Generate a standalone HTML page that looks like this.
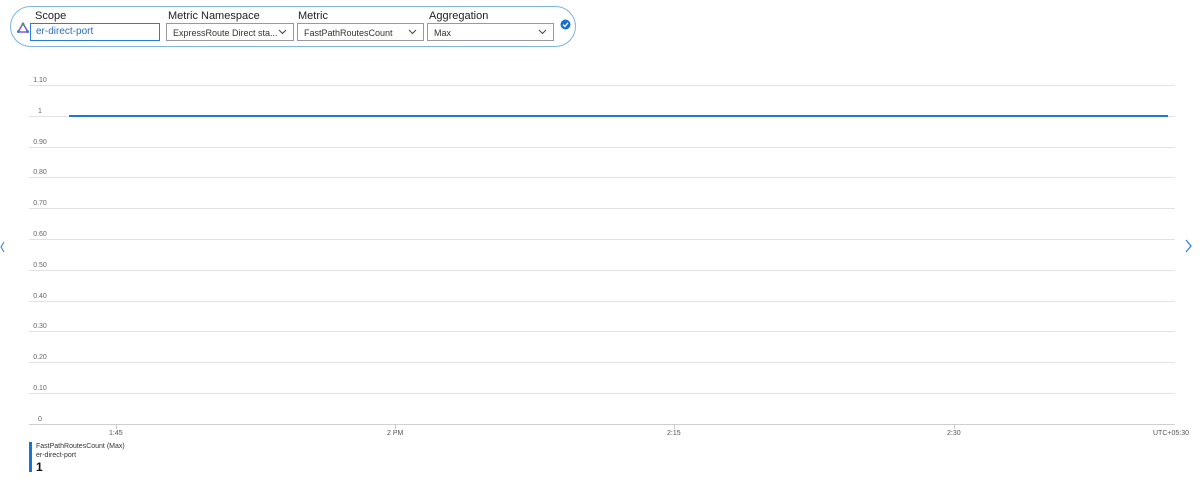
<!DOCTYPE html>
<html><head><style>
body{margin:0;width:1200px;height:482px;background:#fff;font-family:"Liberation Sans",sans-serif;position:relative;overflow:hidden}
.a{position:absolute}
.pill{left:10px;top:6px;width:566px;height:41px;border:1.5px solid #7fb3e3;border-radius:22px;box-sizing:border-box}
.lbl{font-size:11px;color:#222;top:10px}
.box{top:23px;height:18px;border:1px solid #999;box-sizing:border-box;font-size:9px;color:#333;padding:4px 0 0 6px}
.box svg{position:absolute;right:6px;top:5px}
.g{left:29px;width:1146px;height:1px;background:#e2e2e2}
.y{font-size:7px;color:#666;left:30px;width:20px;text-align:center}
.x{font-size:7px;color:#555;top:430px}
.t{width:1px;height:5px;background:#ccc;top:424px}
</style></head><body>
<div class="a pill"></div>
<svg class="a" style="left:17px;top:22px" width="12" height="11"><path d="M6 1.5L11 10H1Z" fill="none" stroke="#8a5cc6" stroke-width="1.6"/><circle cx="6" cy="2" r="1.4" fill="#3aa04a"/><circle cx="1.5" cy="9.5" r="1.4" fill="#2a7bd4"/><circle cx="10.5" cy="9.5" r="1.4" fill="#2a7bd4"/></svg>
<div class="a lbl" style="left:35px">Scope</div>
<div class="a box" style="left:30px;width:130px;border:1.5px solid #2b7cd3;font-size:10px;color:#2b6cc4;padding-top:2px;padding-left:5px">er-direct-port</div>
<div class="a lbl" style="left:168px">Metric Namespace</div>
<div class="a box" style="left:166px;width:128px">ExpressRoute Direct sta...<svg width="9" height="6"><path d="M1 1L4.5 4.5L8 1" stroke="#444" fill="none"/></svg></div>
<div class="a lbl" style="left:298px">Metric</div>
<div class="a box" style="left:297px;width:127px">FastPathRoutesCount<svg width="9" height="6"><path d="M1 1L4.5 4.5L8 1" stroke="#444" fill="none"/></svg></div>
<div class="a lbl" style="left:429px">Aggregation</div>
<div class="a box" style="left:427px;width:127px">Max<svg width="9" height="6"><path d="M1 1L4.5 4.5L8 1" stroke="#444" fill="none"/></svg></div>
<svg class="a" style="left:560px;top:19px" width="11" height="11"><circle cx="5.5" cy="5.5" r="5" fill="#1a6fd3"/><path d="M3 5.6L4.9 7.4L8 3.8" stroke="#fff" stroke-width="1.3" fill="none"/></svg>

<div class="a g" style="top:85px"></div><div class="a y" style="top:77px">1.10</div>
<div class="a g" style="top:116px"></div><div class="a y" style="top:108px">1</div>
<div class="a g" style="top:147px"></div><div class="a y" style="top:139px">0.90</div>
<div class="a g" style="top:177px"></div><div class="a y" style="top:169px">0.80</div>
<div class="a g" style="top:208px"></div><div class="a y" style="top:200px">0.70</div>
<div class="a g" style="top:239px"></div><div class="a y" style="top:231px">0.60</div>
<div class="a g" style="top:270px"></div><div class="a y" style="top:262px">0.50</div>
<div class="a g" style="top:301px"></div><div class="a y" style="top:293px">0.40</div>
<div class="a g" style="top:331px"></div><div class="a y" style="top:323px">0.30</div>
<div class="a g" style="top:362px"></div><div class="a y" style="top:354px">0.20</div>
<div class="a g" style="top:393px"></div><div class="a y" style="top:385px">0.10</div>
<div class="a g" style="top:424px;background:#d0d0d0"></div><div class="a y" style="top:416px">0</div>
<div class="a" style="left:69px;top:115px;width:1099px;height:2px;background:#1f78d1"></div>
<div class="a t" style="left:116px"></div><div class="a x" style="left:109px">1:45</div>
<div class="a t" style="left:395px"></div><div class="a x" style="left:387px">2 PM</div>
<div class="a t" style="left:674px"></div><div class="a x" style="left:667px">2:15</div>
<div class="a t" style="left:954px"></div><div class="a x" style="left:947px">2:30</div>
<div class="a x" style="left:1153px">UTC+05:30</div>
<svg class="a" style="left:0;top:241px" width="5" height="12"><path d="M4 1L1 6L4 11" stroke="#2b7cd3" fill="none"/></svg>
<svg class="a" style="left:1185px;top:239px" width="8" height="14"><path d="M1 1L6 7L1 13" stroke="#2b7cd3" stroke-width="1.2" fill="none"/></svg>
<div class="a" style="left:29px;top:442px;width:3px;height:30px;background:#1a73d1"></div>
<div class="a" style="left:36px;top:443px;font-size:7px;color:#333">FastPathRoutesCount (Max)</div>
<div class="a" style="left:36px;top:452px;font-size:7px;color:#333">er-direct-port</div>
<div class="a" style="left:36px;top:460px;font-size:12px;font-weight:bold;color:#111">1</div>
</body></html>
